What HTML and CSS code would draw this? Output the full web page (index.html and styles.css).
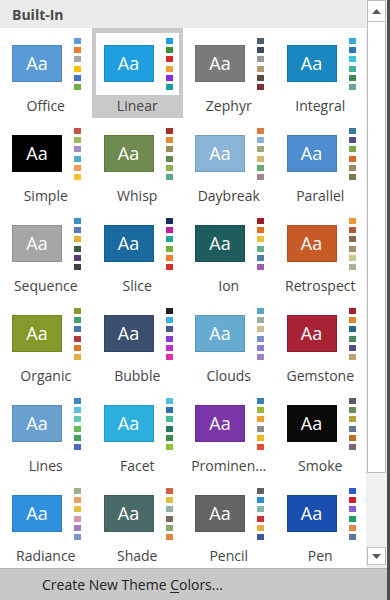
FILE: index.html
```html
<!DOCTYPE html>
<html>
<head>
<meta charset="utf-8">
<link rel="stylesheet" href="styles.css">
</head>
<body>
<div class="frame">
  <div class="main">
    <div class="gallery">
      <div class="header">Built-In</div>
      <div class="grid">
        <div class="cell"><div class="preview"><div class="swatch" style="background:#5b9bd5">Aa</div><div class="dots"><i style="background:#5b9bd5"></i><i style="background:#ed7d31"></i><i style="background:#a5a5a5"></i><i style="background:#ffc000"></i><i style="background:#4472c4"></i><i style="background:#70ad47"></i></div></div><div class="label">Office</div></div>
        <div class="cell selected"><div class="preview"><div class="swatch" style="background:#1f9fe0">Aa</div><div class="dots"><i style="background:#1f9fe0"></i><i style="background:#3c8f3c"></i><i style="background:#d42a2a"></i><i style="background:#f0a030"></i><i style="background:#8a2be2"></i><i style="background:#20a0a0"></i></div></div><div class="label">Linear</div></div>
        <div class="cell"><div class="preview"><div class="swatch" style="background:#7a7a7a">Aa</div><div class="dots"><i style="background:#4e5f70"></i><i style="background:#3f4b5a"></i><i style="background:#9a9a9a"></i><i style="background:#b49a6e"></i><i style="background:#5b4a3e"></i><i style="background:#7a3030"></i></div></div><div class="label">Zephyr</div></div>
        <div class="cell"><div class="preview"><div class="swatch" style="background:#1b87c0">Aa</div><div class="dots"><i style="background:#38aadc"></i><i style="background:#2e76b8"></i><i style="background:#39c6d6"></i><i style="background:#44b29a"></i><i style="background:#3c8a58"></i><i style="background:#6ba5a0"></i></div></div><div class="label">Integral</div></div>

        <div class="cell"><div class="preview"><div class="swatch" style="background:#000">Aa</div><div class="dots"><i style="background:#c8504a"></i><i style="background:#9bbb59"></i><i style="background:#a58bc4"></i><i style="background:#4fadc8"></i><i style="background:#f09a5a"></i><i style="background:#f6c030"></i></div></div><div class="label">Simple</div></div>
        <div class="cell"><div class="preview"><div class="swatch" style="background:#6e8a4e">Aa</div><div class="dots"><i style="background:#a03228"></i><i style="background:#e08a30"></i><i style="background:#9a8c5a"></i><i style="background:#5e8a4c"></i><i style="background:#8cb048"></i><i style="background:#5aa890"></i></div></div><div class="label">Whisp</div></div>
        <div class="cell"><div class="preview"><div class="swatch" style="background:#8ab4d8">Aa</div><div class="dots"><i style="background:#e07a40"></i><i style="background:#90b4d8"></i><i style="background:#a0a880"></i><i style="background:#d8b870"></i><i style="background:#68a878"></i><i style="background:#a08890"></i></div></div><div class="label">Daybreak</div></div>
        <div class="cell"><div class="preview"><div class="swatch" style="background:#4e8ed0">Aa</div><div class="dots"><i style="background:#3a7aa0"></i><i style="background:#5a4a88"></i><i style="background:#80a848"></i><i style="background:#d8682a"></i><i style="background:#9a8a60"></i><i style="background:#807858"></i></div></div><div class="label">Parallel</div></div>

        <div class="cell"><div class="preview"><div class="swatch" style="background:#a6a6a6">Aa</div><div class="dots"><i style="background:#3a90c0"></i><i style="background:#5a7ab8"></i><i style="background:#e8b030"></i><i style="background:#3a5a48"></i><i style="background:#5a3a78"></i><i style="background:#404040"></i></div></div><div class="label">Sequence</div></div>
        <div class="cell"><div class="preview"><div class="swatch" style="background:#1a6aa0">Aa</div><div class="dots"><i style="background:#1a2a5a"></i><i style="background:#c020a0"></i><i style="background:#20a890"></i><i style="background:#78b040"></i><i style="background:#f08030"></i><i style="background:#d03030"></i></div></div><div class="label">Slice</div></div>
        <div class="cell"><div class="preview"><div class="swatch" style="background:#1f5c5e">Aa</div><div class="dots"><i style="background:#a01c24"></i><i style="background:#e07020"></i><i style="background:#e8c040"></i><i style="background:#60b090"></i><i style="background:#4a80a0"></i><i style="background:#9a60a8"></i></div></div><div class="label">Ion</div></div>
        <div class="cell"><div class="preview"><div class="swatch" style="background:#c85a28">Aa</div><div class="dots"><i style="background:#e89838"></i><i style="background:#b05a3a"></i><i style="background:#8a6a50"></i><i style="background:#a09070"></i><i style="background:#c8c890"></i><i style="background:#a8b098"></i></div></div><div class="label">Retrospect</div></div>

        <div class="cell"><div class="preview"><div class="swatch" style="background:#83992a">Aa</div><div class="dots"><i style="background:#8a9a30"></i><i style="background:#40a070"></i><i style="background:#4a78a8"></i><i style="background:#b03a3a"></i><i style="background:#e07828"></i><i style="background:#e0b040"></i></div></div><div class="label">Organic</div></div>
        <div class="cell"><div class="preview"><div class="swatch" style="background:#3b5070">Aa</div><div class="dots"><i style="background:#202020"></i><i style="background:#3ab0e0"></i><i style="background:#4a5a90"></i><i style="background:#8a3ad8"></i><i style="background:#c030d0"></i><i style="background:#e030a8"></i></div></div><div class="label">Bubble</div></div>
        <div class="cell"><div class="preview"><div class="swatch" style="background:#66acd0">Aa</div><div class="dots"><i style="background:#5aa8c8"></i><i style="background:#a0b098"></i><i style="background:#c8c090"></i><i style="background:#7a90c8"></i><i style="background:#8a80d0"></i><i style="background:#a080c0"></i></div></div><div class="label">Clouds</div></div>
        <div class="cell"><div class="preview"><div class="swatch" style="background:#a62234">Aa</div><div class="dots"><i style="background:#a02230"></i><i style="background:#e08830"></i><i style="background:#2a6888"></i><i style="background:#4a8858"></i><i style="background:#5a4a88"></i><i style="background:#c0a070"></i></div></div><div class="label">Gemstone</div></div>

        <div class="cell"><div class="preview"><div class="swatch" style="background:#6aa0d0">Aa</div><div class="dots"><i style="background:#3a8ac0"></i><i style="background:#5ac0d8"></i><i style="background:#60c8b0"></i><i style="background:#68b858"></i><i style="background:#48a060"></i><i style="background:#4a68c0"></i></div></div><div class="label">Lines</div></div>
        <div class="cell"><div class="preview"><div class="swatch" style="background:#2db0e0">Aa</div><div class="dots"><i style="background:#50c0e0"></i><i style="background:#2a70b0"></i><i style="background:#40b890"></i><i style="background:#2a7858"></i><i style="background:#3a8a50"></i><i style="background:#90c040"></i></div></div><div class="label">Facet</div></div>
        <div class="cell"><div class="preview"><div class="swatch" style="background:#7a35a8">Aa</div><div class="dots"><i style="background:#3a80b0"></i><i style="background:#98b838"></i><i style="background:#f0a030"></i><i style="background:#8a8a8a"></i><i style="background:#f0b820"></i><i style="background:#e05030"></i></div></div><div class="label">Prominen...</div></div>
        <div class="cell"><div class="preview"><div class="swatch" style="background:#0a0a0a">Aa</div><div class="dots"><i style="background:#5a5a70"></i><i style="background:#6a8a60"></i><i style="background:#b8a040"></i><i style="background:#607898"></i><i style="background:#b87028"></i><i style="background:#806878"></i></div></div><div class="label">Smoke</div></div>

        <div class="cell"><div class="preview"><div class="swatch" style="background:#3090e0">Aa</div><div class="dots"><i style="background:#a0b090"></i><i style="background:#e8a060"></i><i style="background:#e8c040"></i><i style="background:#d098b0"></i><i style="background:#a080c0"></i><i style="background:#7a98c8"></i></div></div><div class="label">Radiance</div></div>
        <div class="cell"><div class="preview"><div class="swatch" style="background:#4a6a68">Aa</div><div class="dots"><i style="background:#d06040"></i><i style="background:#e0c040"></i><i style="background:#98b0a8"></i><i style="background:#7a6a60"></i><i style="background:#88a878"></i><i style="background:#e08840"></i></div></div><div class="label">Shade</div></div>
        <div class="cell"><div class="preview"><div class="swatch" style="background:#646464">Aa</div><div class="dots"><i style="background:#606060"></i><i style="background:#2a90d0"></i><i style="background:#80b8a0"></i><i style="background:#d03030"></i><i style="background:#e0b040"></i><i style="background:#3a5a98"></i></div></div><div class="label">Pencil</div></div>
        <div class="cell"><div class="preview"><div class="swatch" style="background:#1a4fb0">Aa</div><div class="dots"><i style="background:#2a5ac8"></i><i style="background:#d02030"></i><i style="background:#8a5ad0"></i><i style="background:#20a060"></i><i style="background:#e08a50"></i><i style="background:#607898"></i></div></div><div class="label">Pen</div></div>
      </div>
    </div>
    <div class="scrollbar">
      <div class="sbtn up"><svg width="9" height="5" viewBox="0 0 9 5"><path d="M0 5 L4.5 0 L9 5 Z" fill="#5a5a5a"/></svg></div>
      <div class="thumb"></div>
      <div class="track"></div>
      <div class="sbtn down"><svg width="9" height="5" viewBox="0 0 9 5"><path d="M0 0 L4.5 5 L9 0 Z" fill="#5a5a5a"/></svg></div>
    </div>
  </div>
  <div class="footer">Create New Theme <u>C</u>olors...</div>
</div>
</body>
</html>
```

FILE: styles.css
```css
* { box-sizing: border-box; }
html, body { margin: 0; padding: 0; background: #fff; }
body { font-family: "Open Sans", "Noto Sans", sans-serif; }

.frame {
  width: 390px;
  height: 600px;
  display: flex;
  flex-direction: column;
  border-right: 3px solid #4e4e4e;
  overflow: hidden;
}

.main {
  display: flex;
  height: 568px;
}

.gallery {
  width: 366px;
  background: #fff;
  overflow: hidden;
}

.header {
  height: 28px;
  background: #ebebeb;
  color: #4a4a4a;
  font-weight: 700;
  font-size: 14px;
  line-height: 29px;
  padding-left: 12px;
}

.grid {
  display: grid;
  grid-template-columns: repeat(4, 91.5px);
  grid-auto-rows: 90px;
}

.cell {
  padding: 5px 4px 0;
  display: flex;
  flex-direction: column;
}

.cell.selected {
  background: #c9c9c9;
}

.preview {
  height: 62px;
  display: flex;
  align-items: flex-start;
  padding: 5px 0 0 8px;
  gap: 12px;
  background: #fff;
}

.swatch {
  width: 50px;
  height: 37px;
  margin-top: 7px;
  color: #fff;
  font-size: 18px;
  line-height: 37px;
  text-align: center;
  box-shadow: inset 0 0 0 1px rgba(0,0,0,0.12);
}

.dots {
  display: flex;
  flex-direction: column;
  gap: 3.2px;
}

.dots i {
  display: block;
  width: 7px;
  height: 6px;
}

.label {
  height: 23px;
  line-height: 21px;
  text-align: center;
  font-size: 14px;
  color: #454545;
  white-space: nowrap;
  margin: 0 -4px;
}

.scrollbar {
  width: 21px;
  display: flex;
  flex-direction: column;
  background: #f0f0f0;
  padding: 0 1px 3px 1px;
}

.sbtn {
  background: #fff;
  border: 1px solid #bcbcbc;
  display: flex;
  align-items: center;
  justify-content: center;
}

.sbtn.up { height: 22px; }
.sbtn.down { height: 18px; }

.thumb {
  height: 451px;
  background: #fff;
  border: 1px solid #bcbcbc;
  border-top: none;
}

.track { flex: 1; }

.footer {
  height: 32px;
  background: #c8c8c8;
  border-top: 1px solid #b4b4b4;
  color: #222;
  font-size: 14px;
  line-height: 31px;
  padding-left: 42px;
}

.footer u { text-underline-offset: 2px; }
```
